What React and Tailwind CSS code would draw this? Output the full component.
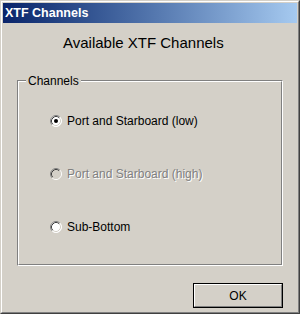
import React from 'react'

const FONT = { fontFamily: '"Liberation Sans", Arial, sans-serif' }

function Radio({ checked, disabled }) {
  const fill = disabled ? '#d4d0c8' : '#ffffff'
  return (
    <svg width="12" height="12" viewBox="0 0 12 12" className="shrink-0">
      <circle cx="6" cy="6" r="5.5" fill={fill} />
      {/* outer ring */}
      <path d="M2.11 9.89 A5.5 5.5 0 0 1 9.89 2.11" fill="none" stroke="#808080" strokeWidth="1" />
      <path d="M9.89 2.11 A5.5 5.5 0 0 1 2.11 9.89" fill="none" stroke="#ffffff" strokeWidth="1" />
      {/* inner ring */}
      <path d="M2.82 9.18 A4.5 4.5 0 0 1 9.18 2.82" fill="none" stroke="#404040" strokeWidth="1" />
      <path d="M9.18 2.82 A4.5 4.5 0 0 1 2.82 9.18" fill="none" stroke="#d4d0c8" strokeWidth="1" />
      {checked && <circle cx="6" cy="6" r="2" fill="#000000" />}
    </svg>
  )
}

function Option({ label, checked, disabled }) {
  return (
    <div className="flex items-center gap-[5px] h-[14px]">
      <Radio checked={checked} disabled={disabled} />
      <span
        className={
          disabled
            ? 'text-[12px] leading-[14px] text-[#808080] [text-shadow:1px_1px_0_#ffffff]'
            : 'text-[12px] leading-[14px] text-black'
        }
      >
        {label}
      </span>
    </div>
  )
}

export default function App() {
  return (
    <div style={FONT} className="w-[300px] h-[314px] bg-[#d4d0c8]">
      {/* Window frame */}
      <div className="w-full h-full border border-t-[#d4d0c8] border-l-[#d4d0c8] border-r-[#404040] border-b-[#404040]">
        <div className="w-full h-full border border-t-white border-l-white border-r-[#808080] border-b-[#808080] p-px flex flex-col">
          {/* Title bar */}
          <div className="h-[20px] flex items-center pl-[2px] bg-gradient-to-r from-[#0a246a] to-[#a6caf0]">
            <span className="text-white font-bold text-[12.5px] leading-none">XTF Channels</span>
          </div>

          {/* Client area */}
          <div className="flex flex-col">
            <div className="mt-[11px] pl-[60px] text-[15px] leading-[18px] text-black">
              Available XTF Channels
            </div>

            {/* Group box */}
            <div className="mt-[28px] ml-[14px] w-[266px] h-[186px] border border-t-[#808080] border-l-[#808080] border-r-white border-b-white">
              <div className="relative w-full h-full border border-t-white border-l-white border-r-[#808080] border-b-[#808080]">
                <span className="absolute left-[7px] top-[-8px] px-[2px] bg-[#d4d0c8] text-[12px] leading-[14px] text-black">
                  Channels
                </span>
                <div className="flex flex-col gap-[39px] pt-[32px] pl-[31px]">
                  <Option label="Port and Starboard (low)" checked />
                  <Option label="Port and Starboard (high)" disabled />
                  <Option label="Sub-Bottom" />
                </div>
              </div>
            </div>

            {/* OK button */}
            <button className="mt-[17px] ml-[190px] w-[90px] h-[25px] border border-black bg-[#d4d0c8] p-0">
              <div className="w-full h-full border border-t-white border-l-white border-r-[#808080] border-b-[#808080] flex items-center justify-center text-[12px] leading-none text-black">
                OK
              </div>
            </button>
          </div>
        </div>
      </div>
    </div>
  )
}
